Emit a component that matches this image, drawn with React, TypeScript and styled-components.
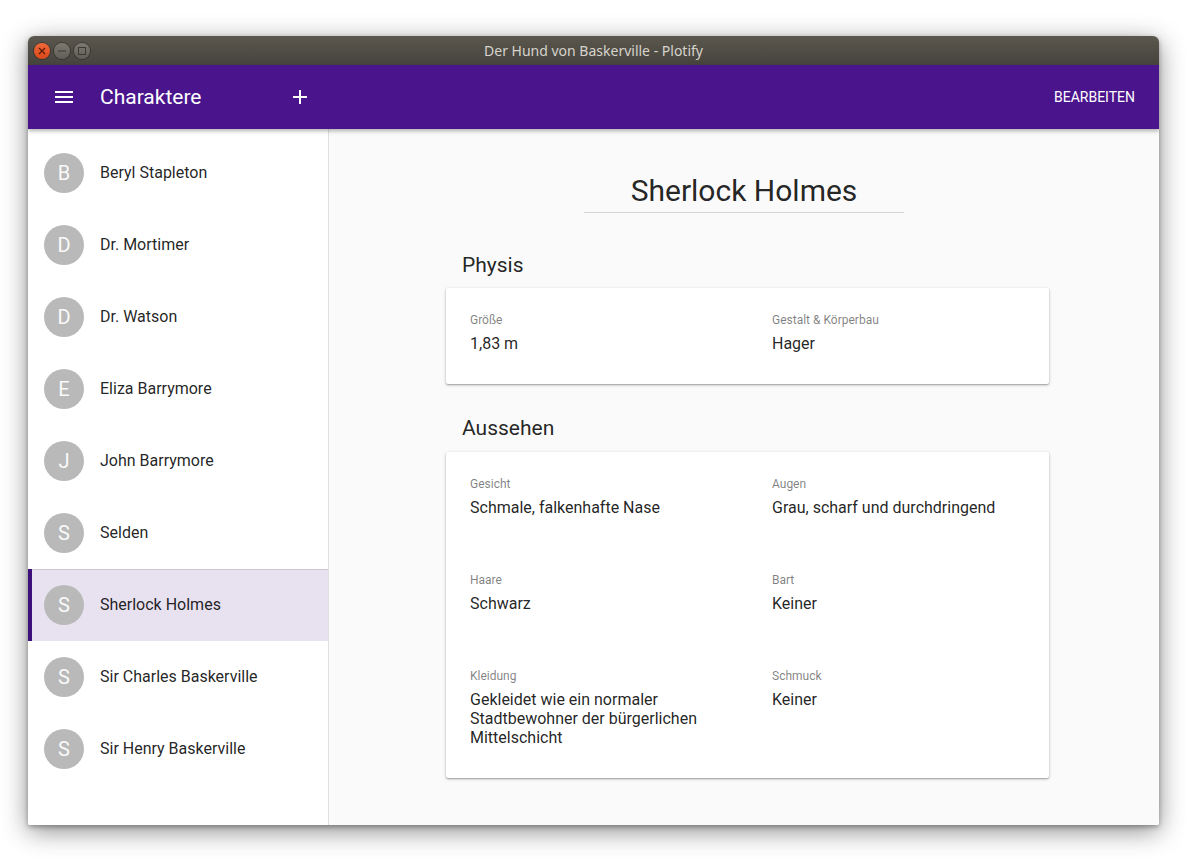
import React from "react";
import styled, { createGlobalStyle } from "styled-components";

const GlobalStyle = createGlobalStyle`
  html, body {
    margin: 0;
    padding: 0;
    background: #fff;
  }
  body {
    font-family: Roboto, "Liberation Sans", sans-serif;
    color: rgba(0, 0, 0, 0.87);
  }
`;

interface Field {
  label: string;
  value: string;
}

const CHARACTERS = [
  "Beryl Stapleton",
  "Dr. Mortimer",
  "Dr. Watson",
  "Eliza Barrymore",
  "John Barrymore",
  "Selden",
  "Sherlock Holmes",
  "Sir Charles Baskerville",
  "Sir Henry Baskerville",
];

const PHYSIS: Field[] = [
  { label: "Größe", value: "1,83 m" },
  { label: "Gestalt & Körperbau", value: "Hager" },
];

const AUSSEHEN: Field[] = [
  { label: "Gesicht", value: "Schmale, falkenhafte Nase" },
  { label: "Augen", value: "Grau, scharf und durchdringend" },
  { label: "Haare", value: "Schwarz" },
  { label: "Bart", value: "Keiner" },
  { label: "Kleidung", value: "Gekleidet wie ein normaler Stadtbewohner der bürgerlichen Mittelschicht" },
  { label: "Schmuck", value: "Keiner" },
];

const App = () => {
  return (
    <Desktop>
      <GlobalStyle />
      <Window>
        <TitleBar>
          <WindowControls>
            <WindowControl $kind="close">
              <svg width="8" height="8" viewBox="0 0 8 8">
                <path d="M1 1l6 6M7 1L1 7" stroke="#5a1c08" strokeWidth="1.3" fill="none" />
              </svg>
            </WindowControl>
            <WindowControl $kind="other">
              <svg width="8" height="8" viewBox="0 0 8 8">
                <path d="M0 4h8" stroke="#3b3a35" strokeWidth="1.2" fill="none" />
              </svg>
            </WindowControl>
            <WindowControl $kind="other">
              <svg width="8" height="8" viewBox="0 0 8 8">
                <rect x="0.5" y="0.5" width="7" height="7" stroke="#3b3a35" strokeWidth="1" fill="none" />
              </svg>
            </WindowControl>
          </WindowControls>
          <WindowTitle>Der Hund von Baskerville - Plotify</WindowTitle>
        </TitleBar>
        <AppBar>
          <AppBarLeft>
            <IconSlot>
              <svg width="24" height="24" viewBox="0 0 24 24" fill="#fff">
                <path d="M3 18h18v-2H3v2zm0-5h18v-2H3v2zm0-7v2h18V6H3z" />
              </svg>
            </IconSlot>
            <AppBarTitle>Charaktere</AppBarTitle>
            <IconSlot>
              <svg width="24" height="24" viewBox="0 0 24 24" fill="#fff">
                <path d="M19 13h-6v6h-2v-6H5v-2h6V5h2v6h6v2z" />
              </svg>
            </IconSlot>
          </AppBarLeft>
          <AppBarAction>Bearbeiten</AppBarAction>
        </AppBar>
        <Body>
          <Sidebar>
            {CHARACTERS.map((name) => (
              <ListItem key={name} $selected={name === "Sherlock Holmes"}>
                <Avatar>{name[0]}</Avatar>
                <ItemName>{name}</ItemName>
              </ListItem>
            ))}
          </Sidebar>
          <Main>
            <NameHeading>Sherlock Holmes</NameHeading>
            <Section>
              <SectionTitle>Physis</SectionTitle>
              <Card>
                {PHYSIS.map((f) => (
                  <FieldBox key={f.label}>
                    <FieldLabel>{f.label}</FieldLabel>
                    <FieldValue>{f.value}</FieldValue>
                  </FieldBox>
                ))}
              </Card>
            </Section>
            <Section>
              <SectionTitle>Aussehen</SectionTitle>
              <Card>
                {AUSSEHEN.map((f) => (
                  <FieldBox key={f.label}>
                    <FieldLabel>{f.label}</FieldLabel>
                    <FieldValue>{f.value}</FieldValue>
                  </FieldBox>
                ))}
              </Card>
            </Section>
          </Main>
        </Body>
      </Window>
    </Desktop>
  );
};

const Desktop = styled.div`
  width: 1190px;
  height: 860px;
  box-sizing: border-box;
  padding: 36px 31px 35px 28px;
  overflow: hidden;
`;

const Window = styled.div`
  height: 789px;
  display: flex;
  flex-direction: column;
  border-radius: 6px 6px 2px 2px;
  overflow: hidden;
  box-shadow: 0 2px 5px rgba(0, 0, 0, 0.3), 0 6px 26px rgba(0, 0, 0, 0.45);
`;

const TitleBar = styled.div`
  position: relative;
  flex: 0 0 29px;
  display: flex;
  align-items: center;
  justify-content: center;
  background: linear-gradient(#5b574e, #45433d);
`;

const WindowControls = styled.div`
  position: absolute;
  left: 6px;
  top: 7px;
  display: flex;
  gap: 4px;
`;

const WindowControl = styled.div<{ $kind: "close" | "other" }>`
  width: 16px;
  height: 16px;
  border-radius: 50%;
  display: flex;
  align-items: center;
  justify-content: center;
  background: ${(p) =>
    p.$kind === "close" ? "linear-gradient(#f0693a, #d9481a)" : "linear-gradient(#7c7970, #5f5d55)"};
  box-shadow: 0 0 0 1px rgba(40, 38, 34, 0.55);
`;

const WindowTitle = styled.div`
  font-family: "Noto Sans", "Open Sans", sans-serif;
  font-size: 14px;
  color: #d6d3cc;
`;

const AppBar = styled.header`
  position: relative;
  z-index: 2;
  flex: 0 0 64px;
  display: flex;
  align-items: center;
  justify-content: space-between;
  padding: 0 24px;
  background: #4a148c;
  color: #fff;
  box-shadow: 0 2px 4px rgba(0, 0, 0, 0.3);
`;

const AppBarLeft = styled.div`
  display: flex;
  align-items: center;
`;

const IconSlot = styled.div`
  width: 24px;
  height: 24px;
  display: flex;
`;

const AppBarTitle = styled.div`
  width: 188px;
  margin-left: 24px;
  font-size: 21px;
`;

const AppBarAction = styled.div`
  font-size: 14px;
  text-transform: uppercase;
`;

const Body = styled.div`
  flex: 1;
  min-height: 0;
  display: flex;
`;

const Sidebar = styled.nav`
  flex: 0 0 301px;
  box-sizing: border-box;
  padding-top: 8px;
  background: #fff;
  border-right: 1px solid rgba(0, 0, 0, 0.12);
`;

const ListItem = styled.div<{ $selected?: boolean }>`
  height: 72px;
  box-sizing: border-box;
  display: flex;
  align-items: center;
  padding-left: ${(p) => (p.$selected ? "12px" : "16px")};
  background: ${(p) => (p.$selected ? "#e8e2f0" : "transparent")};
  border-left: ${(p) => (p.$selected ? "4px solid #3d0f7a" : "none")};
  box-shadow: ${(p) => (p.$selected ? "inset 0 1px 0 rgba(0, 0, 0, 0.12)" : "none")};
`;

const Avatar = styled.div`
  flex: 0 0 40px;
  height: 40px;
  border-radius: 50%;
  display: flex;
  align-items: center;
  justify-content: center;
  background: #b9b9b9;
  color: #fafafa;
  font-size: 20px;
`;

const ItemName = styled.div`
  margin-left: 16px;
  padding-bottom: 2px;
  font-size: 16px;
`;

const Main = styled.main`
  flex: 1;
  min-width: 0;
  display: flex;
  flex-direction: column;
  padding-left: 117px;
  background: #fafafa;
`;

const NameHeading = styled.h1`
  align-self: flex-start;
  box-sizing: border-box;
  width: 320px;
  margin: 42px 0 0 138px;
  padding-bottom: 2px;
  border-bottom: 1px solid rgba(0, 0, 0, 0.14);
  font-size: 30px;
  font-weight: 400;
  line-height: 39px;
  text-align: center;
`;

const Section = styled.section`
  width: 603px;
  margin-top: 31px;
  &:first-of-type {
    margin-top: 39px;
  }
`;

const SectionTitle = styled.h2`
  margin: 0 0 11px 16px;
  font-size: 21px;
  font-weight: 400;
  line-height: 26px;
  section:first-of-type > & {
    margin-bottom: 10px;
  }
`;

const Card = styled.div`
  display: grid;
  grid-template-columns: 302px 301px;
  background: #fff;
  border-radius: 2px;
  box-shadow: 0 1px 3px rgba(0, 0, 0, 0.3), 0 1px 1px rgba(0, 0, 0, 0.14);
`;

const FieldBox = styled.div`
  box-sizing: border-box;
  min-height: 96px;
  padding: 24px 24px 31px;
`;

const FieldLabel = styled.div`
  padding-top: 1px;
  font-size: 12px;
  line-height: 15px;
  color: rgba(0, 0, 0, 0.5);
`;

const FieldValue = styled.div`
  margin-top: 6px;
  font-size: 16px;
  line-height: 19px;
`;

export default App;
